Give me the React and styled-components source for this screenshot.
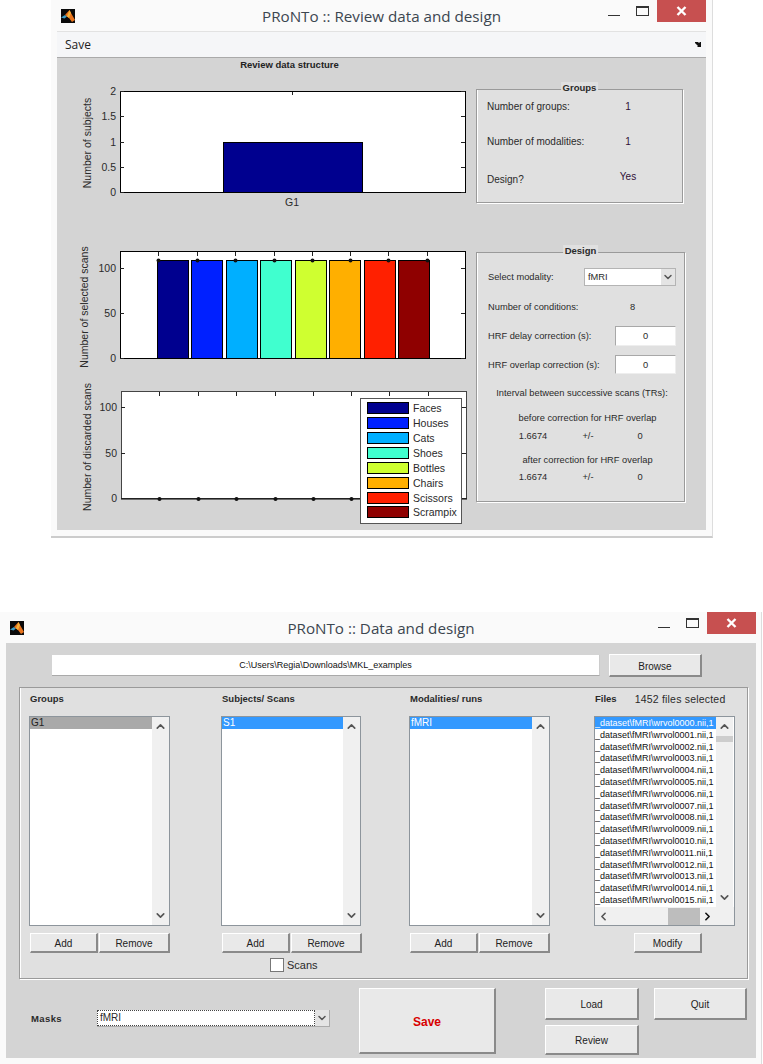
import React from "react";
import styled, { createGlobalStyle } from "styled-components";
import { ChevronUp, ChevronDown, ChevronLeft, ChevronRight } from "lucide-react";

const conditions = [
    { name: "Faces", color: "#00008f", x: 157, w: 31, dot: 158, y: 408 },
    { name: "Houses", color: "#0020ff", x: 191, w: 31, dot: 197, y: 423 },
    { name: "Cats", color: "#00afff", x: 226, w: 31, dot: 235, y: 438 },
    { name: "Shoes", color: "#40ffcf", x: 260, w: 31, dot: 274, y: 453 },
    { name: "Bottles", color: "#cfff30", x: 295, w: 31, dot: 312, y: 468 },
    { name: "Chairs", color: "#ffaf00", x: 329, w: 31, dot: 350, y: 483 },
    { name: "Scissors", color: "#ff2000", x: 364, w: 31, dot: 388, y: 498 },
    { name: "Scrampix", color: "#8f0000", x: 398, w: 31, dot: 427, y: 512 },
];

const fileNames = Array.from({ length: 16 }, (_, i) => {
    const num = String(i).padStart(4, "0");
    return `_dataset\\fMRI\\wrvol${num}.nii,1`;
});

const App = () => {
    return (
        <Page>
            <GlobalStyle />
            <TopWindow>
                <TitleBar>
                    <MatlabIcon />
                    <Title>PRoNTo :: Review data and design</Title>
                    <WindowControls />
                </TitleBar>
                <MenuBar>
                    <span>Save</span>
                    <svg width="7" height="7" viewBox="0 0 7 7">
                        <path d="M0 1h3l1 1 1-1 1 0v5H2l1-1-1-1-2-2z" fill="#111" />
                    </svg>
                </MenuBar>
                <ReviewPanel>
                    <ChartColumn>
                        <ChartHeading>Review data structure</ChartHeading>
                        <SubjectsChart />
                        <SelectedChart />
                        <DiscardedChart />
                    </ChartColumn>
                    <SideColumn>
                        <GroupsBox>
                            <BoxTitle>Groups</BoxTitle>
                            <InfoRow>
                                <span>Number of groups:</span>
                                <InfoValue>1</InfoValue>
                            </InfoRow>
                            <InfoRow>
                                <span>Number of modalities:</span>
                                <InfoValue>1</InfoValue>
                            </InfoRow>
                            <InfoRow>
                                <DesignLabel>Design?</DesignLabel>
                                <InfoValue>Yes</InfoValue>
                            </InfoRow>
                        </GroupsBox>
                        <DesignBox>
                            <BoxTitle>Design</BoxTitle>
                            <DesignRow $top={0}>
                                <DesignText $width={96}>Select modality:</DesignText>
                                <SmallSelect>
                                    <span>fMRI</span>
                                    <SelectArrow>
                                        <ChevronDown size={12} strokeWidth={3} />
                                    </SelectArrow>
                                </SmallSelect>
                            </DesignRow>
                            <DesignRow $top={16}>
                                <DesignText $width={142}>Number of conditions:</DesignText>
                                <DesignText $width={12}>8</DesignText>
                            </DesignRow>
                            <DesignRow $top={14}>
                                <DesignText $width={127}>HRF delay correction (s):</DesignText>
                                <NumberField $height={20}>0</NumberField>
                            </DesignRow>
                            <DesignRow $top={9}>
                                <DesignText $width={127}>HRF overlap correction (s):</DesignText>
                                <NumberField $height={19}>0</NumberField>
                            </DesignRow>
                            <CenteredLine $top={13}>Interval between successive scans (TRs):</CenteredLine>
                            <CenteredLine $top={13} $shift={11}>before correction for HRF overlap</CenteredLine>
                            <IntervalValues $top={6}>
                                <span>1.6674</span>
                                <span>+/-</span>
                                <span>0</span>
                            </IntervalValues>
                            <CenteredLine $top={12} $shift={11}>after correction for HRF overlap</CenteredLine>
                            <IntervalValues $top={5}>
                                <span>1.6674</span>
                                <span>+/-</span>
                                <span>0</span>
                            </IntervalValues>
                        </DesignBox>
                    </SideColumn>
                </ReviewPanel>
            </TopWindow>

            <BottomWindow>
                <TitleBar>
                    <MatlabIcon />
                    <Title>PRoNTo :: Data and design</Title>
                    <WindowControls />
                </TitleBar>
                <DataPanel>
                    <PathRow>
                        <PathField>C:\Users\Regia\Downloads\MKL_examples</PathField>
                        <PanelButton $width={93} $height={23}>Browse</PanelButton>
                    </PathRow>
                    <ListsBox>
                        <ListColumn>
                            <ListHeader>Groups</ListHeader>
                            <ListBox $width={141}>
                                <ListRows>
                                    <ListRow $state="inactive">G1</ListRow>
                                </ListRows>
                                <VerticalScroll />
                            </ListBox>
                            <AddRemove />
                        </ListColumn>
                        <ListColumn>
                            <ListHeader>Subjects/ Scans</ListHeader>
                            <ListBox $width={140}>
                                <ListRows>
                                    <ListRow $state="selected">S1</ListRow>
                                </ListRows>
                                <VerticalScroll />
                            </ListBox>
                            <AddRemove />
                            <ScansRow>
                                <CheckBox />
                                <span>Scans</span>
                            </ScansRow>
                        </ListColumn>
                        <ListColumn>
                            <ListHeader>Modalities/ runs</ListHeader>
                            <ListBox $width={141}>
                                <ListRows>
                                    <ListRow $state="selected">fMRI</ListRow>
                                </ListRows>
                                <VerticalScroll />
                            </ListBox>
                            <AddRemove />
                        </ListColumn>
                        <ListColumn>
                            <FilesHeader>
                                <ListHeader>Files</ListHeader>
                                <FilesCount>1452 files selected</FilesCount>
                            </FilesHeader>
                            <FilesBox>
                                <FilesMain>
                                    <ListRows>
                                        {fileNames.map((name, i) => (
                                            <FileRow key={name} $state={i === 0 ? "selected" : "plain"}>
                                                {name}
                                            </FileRow>
                                        ))}
                                    </ListRows>
                                    <VerticalScroll $thumb />
                                </FilesMain>
                                <HorizontalScroll>
                                    <ChevronLeft size={13} strokeWidth={3} color="#555" />
                                    <HorizontalThumb />
                                    <ChevronRight size={13} strokeWidth={3} color="#111" />
                                </HorizontalScroll>
                            </FilesBox>
                            <ModifyRow>
                                <PanelButton $width={68} $height={20}>Modify</PanelButton>
                            </ModifyRow>
                        </ListColumn>
                    </ListsBox>
                    <FooterRow>
                        <MasksRow>
                            <MasksLabel>Masks</MasksLabel>
                            <MasksSelect>
                                <MasksValue>fMRI</MasksValue>
                                <SelectArrow>
                                    <ChevronDown size={12} strokeWidth={3} />
                                </SelectArrow>
                            </MasksSelect>
                        </MasksRow>
                        <SaveButton>Save</SaveButton>
                        <LoadColumn>
                            <PanelButton $width={94} $height={32}>Load</PanelButton>
                            <PanelButton $width={94} $height={30}>Review</PanelButton>
                        </LoadColumn>
                        <PanelButton $width={93} $height={32}>Quit</PanelButton>
                    </FooterRow>
                </DataPanel>
            </BottomWindow>
        </Page>
    );
};

export default App;

const MatlabIcon = () => (
    <IconWrap width="14" height="14" viewBox="0 0 14 14">
        <rect width="14" height="14" fill="#0a0a0a" />
        <path d="M0 8.5 4 6 6 7.5 3.5 9.5z" fill="#3f9fc8" />
        <path d="M4 6 8.5 1 10 4 14 11 11 13 8 9 6 7.5z" fill="#e8731c" />
        <path d="M8.5 1 10 4 8 9 6 7.5z" fill="#f4b13a" />
    </IconWrap>
);

const WindowControls = () => (
    <Controls>
        <MinimizeGlyph />
        <MaximizeGlyph />
        <CloseButton>
            <svg width="11" height="10" viewBox="0 0 11 10">
                <path d="M1.5 1 9.5 9M9.5 1 1.5 9" stroke="#fff" strokeWidth="2.4" />
            </svg>
        </CloseButton>
    </Controls>
);

const AddRemove = () => (
    <ButtonPair>
        <PanelButton $width={68} $height={20}>Add</PanelButton>
        <PanelButton $width={71} $height={20}>Remove</PanelButton>
    </ButtonPair>
);

const VerticalScroll = ({ $thumb }) => (
    <ScrollTrack>
        <ChevronUp size={13} strokeWidth={3} color="#555" />
        {$thumb && <VerticalThumb />}
        <ScrollSpacer />
        <ChevronDown size={13} strokeWidth={3} color="#555" />
    </ScrollTrack>
);

// charts are drawn in page coordinates, each svg shows its own slice of the window
const ChartSvg = ({ top, height, children }) => (
    <PlotSvg width="415" height={height} viewBox={`57 ${top} 415 ${height}`}>
        {children}
    </PlotSvg>
);

const YTicks = ({ left, right, items }) =>
    items.map(([label, y]) => (
        <g key={label}>
            <path d={`M${left} ${y + 0.5}h4M${right} ${y + 0.5}h-4`} stroke="#222" />
            <AxisText x={left - 4} y={y + 4} textAnchor="end">{label}</AxisText>
        </g>
    ));

const SubjectsChart = () => (
    <ChartSvg top={80} height={132}>
        <rect x="120.5" y="91.5" width="345" height="101" fill="#fff" stroke="#000" />
        <rect x="223.5" y="142.5" width="139" height="50" fill="#00008f" stroke="#000" />
        <YTicks
            left={120}
            right={465}
            items={[["2", 91], ["1.5", 116], ["1", 142], ["0.5", 167], ["0", 192]]}
        />
        <path d="M292.5 92v3" stroke="#222" />
        <AxisText x="292" y="206" textAnchor="middle">G1</AxisText>
        <AxisText transform="translate(91 143) rotate(-90)" textAnchor="middle">Number of subjects</AxisText>
    </ChartSvg>
);

const SelectedChart = () => (
    <ChartSvg top={245} height={127}>
        <rect x="120.5" y="251.5" width="345" height="107" fill="#fff" stroke="#000" />
        {conditions.map((c) => (
            <rect key={c.name} x={c.x + 0.5} y="260.5" width={c.w} height="98" fill={c.color} stroke="#000" />
        ))}
        {conditions.map((c) => (
            <g key={c.name}>
                <path d={`M${c.dot + 0.5} 252v4`} stroke="#222" />
                <circle cx={c.dot + 0.5} cy="260.5" r="2" fill="#111" />
            </g>
        ))}
        <YTicks left={120} right={465} items={[["100", 268], ["50", 313], ["0", 358]]} />
        <AxisText transform="translate(88 307) rotate(-90)" textAnchor="middle">Number of selected scans</AxisText>
    </ChartSvg>
);

const DiscardedChart = () => (
    <ChartSvg top={378} height={148}>
        <rect x="121.5" y="391.5" width="345" height="107" fill="#fff" stroke="#444" />
        <path d="M121 499h346" stroke="#000" />
        {conditions.map((c) => (
            <g key={c.name}>
                <path d={`M${c.dot + 1.5} 392v4`} stroke="#222" />
                <circle cx={c.dot + 1.5} cy="499" r="2" fill="#111" />
            </g>
        ))}
        <YTicks left={121} right={466} items={[["100", 407], ["50", 453], ["0", 498]]} />
        <AxisText transform="translate(91 447) rotate(-90)" textAnchor="middle">Number of discarded scans</AxisText>
        <rect x="360.5" y="398.5" width="101" height="125" fill="#fff" stroke="#555" />
        {conditions.map((c) => (
            <g key={c.name}>
                <rect x="367.5" y={c.y - 5.5} width="41" height="11" fill={c.color} stroke="#000" />
                <AxisText x="413" y={c.y + 4}>{c.name}</AxisText>
            </g>
        ))}
    </ChartSvg>
);

const GlobalStyle = createGlobalStyle`
    html, body {
        margin: 0;
        padding: 0;
        background: #fff;
        overflow: hidden;
    }
    body {
        font-family: "Liberation Sans", Arial, sans-serif;
        font-size: 10px;
        color: #2a2a2a;
    }
`;

const Page = styled.div`
    width: 763px;
    height: 1064px;
    overflow: hidden;
    display: flex;
    flex-direction: column;
`;

const WindowFrame = styled.section`
    display: flex;
    flex-direction: column;
    background: #fafafa;
    box-sizing: border-box;
`;

const TopWindow = styled(WindowFrame)`
    width: 662px;
    height: 538px;
    margin-left: 51px;
    padding: 0 6px 6px;
    border-right: 1px solid #ddd;
    border-bottom: 2px solid #ccc;
`;

const BottomWindow = styled(WindowFrame)`
    width: 762px;
    height: 452px;
    margin-top: 74px;
    padding: 0 5px 6px 6px;
    border-right: 1px solid #ddd;
`;

const TitleBar = styled.header`
    flex: none;
    height: 31px;
    display: grid;
    grid-template-columns: 1fr auto 1fr;
    align-items: start;
`;

const IconWrap = styled.svg`
    margin: 9px 0 0 4px;
    display: block;
`;

const Title = styled.h1`
    margin: 6px 0 0;
    font: 400 15.2px/20px "Open Sans", sans-serif;
    color: #3c4650;
    white-space: nowrap;
`;

const Controls = styled.div`
    justify-self: end;
    display: flex;
    align-items: flex-start;
`;

const MinimizeGlyph = styled.span`
    width: 12px;
    height: 1px;
    margin: 15px 16px 0 0;
    background: #333;
`;

const MaximizeGlyph = styled.span`
    width: 13px;
    height: 10px;
    margin: 6px 8px 0 0;
    box-sizing: border-box;
    border: 1px solid #333;
    border-top-width: 2px;
`;

const CloseButton = styled.span`
    width: 49px;
    height: 22px;
    background: #c75050;
    display: flex;
    align-items: center;
    justify-content: center;
`;

const MenuBar = styled.nav`
    flex: none;
    height: 27px;
    box-sizing: border-box;
    padding: 0 4px 0 8px;
    display: flex;
    align-items: center;
    justify-content: space-between;
    background: #f5f6f8;
    border-top: 1px solid #e2e2e2;
    border-bottom: 1px solid #aaa;
    font: 400 12px "Open Sans", sans-serif;
    color: #222;
`;

const ReviewPanel = styled.main`
    flex: 1;
    display: flex;
    background: #d4d4d4;
`;

const ChartColumn = styled.div`
    width: 419px;
    flex: none;
    display: flex;
    flex-direction: column;
`;

const ChartHeading = styled.h2`
    margin: 0;
    width: 415px;
    height: 14px;
    box-sizing: border-box;
    padding-left: 50px;
    text-align: center;
    font: 700 9.5px/14px "Liberation Sans", sans-serif;
    color: #222;
`;

const PlotSvg = styled.svg`
    display: block;
    flex: none;
    &:nth-of-type(1) {
        margin-top: 8px;
    }
    &:nth-of-type(2) {
        margin-top: 33px;
    }
    &:nth-of-type(3) {
        margin-top: 6px;
    }
`;

const AxisText = styled.text`
    font: 400 10.5px "Liberation Sans", sans-serif;
    fill: #2a2a2a;
`;

const SideColumn = styled.div`
    display: flex;
    flex-direction: column;
`;

const EtchedBox = styled.div`
    position: relative;
    box-sizing: border-box;
    background: #e0e0e0;
    border: 1px solid #9a9a9a;
    box-shadow: inset 1px 0 0 #fff, 1px 1px 0 #fff;
`;

const GroupsBox = styled(EtchedBox)`
    width: 207px;
    height: 114px;
    margin-top: 31px;
    padding: 11px 10px 0;
    display: flex;
    flex-direction: column;
    gap: 23px;
`;

const DesignBox = styled(EtchedBox)`
    width: 209px;
    height: 250px;
    margin-top: 49px;
    padding: 15px 8px 0 11px;
    display: flex;
    flex-direction: column;
    font-size: 9.3px;
`;

const BoxTitle = styled.span`
    position: absolute;
    top: -8px;
    left: 50%;
    transform: translateX(-50%);
    padding: 0 2px;
    background: #e0e0e0;
    font: 700 9.5px/12px "Liberation Sans", sans-serif;
`;

const InfoRow = styled.div`
    display: grid;
    grid-template-columns: 116px 50px;
    height: 12px;
    line-height: 12px;
    white-space: nowrap;
`;

const InfoValue = styled.span`
    text-align: center;
    color: #301038;
`;

const DesignLabel = styled.span`
    margin-top: 3px;
`;

const DesignRow = styled.div`
    display: flex;
    align-items: center;
    margin-top: ${(p) => p.$top}px;
    white-space: nowrap;
`;

const DesignText = styled.span`
    width: ${(p) => p.$width}px;
    flex: none;
`;

const SmallSelect = styled.div`
    width: 93px;
    height: 18px;
    box-sizing: border-box;
    display: flex;
    align-items: center;
    justify-content: space-between;
    padding-left: 3px;
    background: #fff;
    border: 1px solid #b4b4b4;
`;

const SelectArrow = styled.span`
    width: 14px;
    align-self: stretch;
    display: flex;
    align-items: center;
    justify-content: center;
    background: #e4e4e4;
    color: #555;
`;

const NumberField = styled.div`
    width: 62px;
    height: ${(p) => p.$height}px;
    box-sizing: border-box;
    display: flex;
    align-items: center;
    justify-content: center;
    background: #fff;
    border: 1px solid #a8a8a8;
    border-right-color: #eee;
    border-bottom-color: #eee;
`;

const CenteredLine = styled.div`
    margin-top: ${(p) => p.$top}px;
    padding-left: ${(p) => p.$shift || 0}px;
    height: 12px;
    line-height: 12px;
    text-align: center;
    white-space: nowrap;
`;

const IntervalValues = styled.div`
    margin-top: ${(p) => p.$top}px;
    display: grid;
    grid-template-columns: 90px 20px 84px;
    height: 12px;
    line-height: 12px;
    text-align: center;
`;

const DataPanel = styled.main`
    flex: 1;
    display: flex;
    flex-direction: column;
    background: #d4d4d4;
`;

const PathRow = styled.div`
    display: flex;
    gap: 9px;
    margin: 11px 0 0 46px;
`;

const PathField = styled.div`
    width: 548px;
    height: 21px;
    margin-top: 1px;
    box-sizing: border-box;
    display: flex;
    align-items: center;
    justify-content: center;
    background: #fff;
    border-bottom: 1px solid #aaa;
    border-right: 1px solid #ccc;
    font-size: 9px;
    color: #111;
`;

const PanelButton = styled.button`
    width: ${(p) => p.$width}px;
    height: ${(p) => p.$height}px;
    flex: none;
    padding: 2px 0 0;
    box-sizing: border-box;
    background: #e9e9e9;
    border: 1px solid #fff;
    border-right: 2px solid #8a8a8a;
    border-bottom: 2px solid #8a8a8a;
    font: 400 10px "Liberation Sans", sans-serif;
    color: #222;
`;

const ListsBox = styled(EtchedBox)`
    width: 729px;
    height: 292px;
    margin: 10px 0 0 13px;
    padding: 5px 0 0 9px;
    display: grid;
    grid-template-columns: 192px 188px 185px 141px;
`;

const ListColumn = styled.div`
    display: flex;
    flex-direction: column;
    align-items: flex-start;
`;

const ListHeader = styled.div`
    height: 12px;
    line-height: 12px;
    padding-left: 1px;
    font-weight: 700;
    font-size: 9.5px;
`;

const FilesHeader = styled.div`
    display: flex;
    gap: 18px;
`;

const FilesCount = styled.span`
    line-height: 12px;
    font-size: 10.5px;
    letter-spacing: 0.2px;
`;

const ListBox = styled.div`
    width: ${(p) => p.$width}px;
    height: 210px;
    margin-top: 11px;
    box-sizing: border-box;
    display: flex;
    background: #fff;
    border: 1px solid #8d959c;
    overflow: hidden;
`;

const ListRows = styled.div`
    flex: 1;
    min-width: 0;
    display: flex;
    flex-direction: column;
    overflow: hidden;
`;

const rowColors = {
    inactive: "background: #a9a9a9; color: #222;",
    selected: "background: #3399ff; color: #fff;",
    plain: "background: #fff; color: #111;",
};

const ListRow = styled.div`
    flex: none;
    height: 11.8px;
    line-height: 12px;
    padding-left: 1px;
    font-size: 10px;
    white-space: nowrap;
    overflow: hidden;
    ${(p) => rowColors[p.$state]}
`;

const FileRow = styled(ListRow)`
    padding-left: 0;
    font-size: 9px;
`;

const ScrollTrack = styled.div`
    width: 17px;
    flex: none;
    display: flex;
    flex-direction: column;
    align-items: center;
    padding: 3px 0;
    box-sizing: border-box;
    background: #f0f0f0;
`;

const VerticalThumb = styled.div`
    width: 17px;
    height: 6px;
    margin-top: 3px;
    background: #cdcdcd;
`;

const ScrollSpacer = styled.div`
    flex: 1;
`;

const ButtonPair = styled.div`
    display: flex;
    gap: 1px;
    margin: 7px 0 0 1px;
`;

const ScansRow = styled.label`
    display: flex;
    align-items: center;
    gap: 3px;
    margin: 5px 0 0 49px;
    font-size: 11px;
`;

const CheckBox = styled.span`
    width: 14px;
    height: 14px;
    box-sizing: border-box;
    background: #fff;
    border: 1px solid #777;
`;

const FilesBox = styled.div`
    width: 141px;
    height: 210px;
    margin-top: 11px;
    box-sizing: border-box;
    display: flex;
    flex-direction: column;
    background: #f0f0f0;
    border: 1px solid #8d959c;
    overflow: hidden;
`;

const FilesMain = styled.div`
    height: 190px;
    flex: none;
    display: flex;
    padding-right: 1px;
    background: #fff;
    overflow: hidden;
`;

const HorizontalScroll = styled.div`
    flex: 1;
    display: flex;
    align-items: center;
    padding: 0 18px 0 2px;
`;

const HorizontalThumb = styled.div`
    width: 32px;
    height: 17px;
    margin-left: 58px;
    margin-right: 1px;
    background: #bdbdbd;
`;

const ModifyRow = styled.div`
    margin: 7px 0 0 40px;
`;

const FooterRow = styled.div`
    display: flex;
    align-items: flex-start;
    margin: 9px 0 0 25px;
`;

const MasksRow = styled.div`
    display: flex;
    align-items: center;
    margin-top: 22px;
`;

const MasksLabel = styled.span`
    width: 66px;
    font-weight: 700;
    font-size: 9.5px;
    letter-spacing: 0.4px;
`;

const MasksSelect = styled.div`
    width: 233px;
    height: 17px;
    box-sizing: border-box;
    display: flex;
    background: #fff;
    border-right: 1px solid #aaa;
    border-bottom: 1px solid #aaa;
`;

const MasksValue = styled.span`
    flex: 1;
    padding-left: 2px;
    line-height: 14px;
    border: 1px dotted #444;
`;

const SaveButton = styled(PanelButton).attrs({ $width: 137, $height: 66 })`
    margin-left: 29px;
    font-size: 12px;
    font-weight: 700;
    color: #d80000;
`;

const LoadColumn = styled.div`
    display: flex;
    flex-direction: column;
    gap: 5px;
    margin: 0 15px 0 49px;
`;
